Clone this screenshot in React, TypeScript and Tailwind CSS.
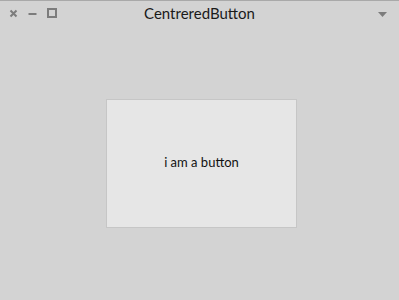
export default function App() {
  return (
    <div
      className="flex h-[300px] w-[399px] flex-col border-t border-[#a9a9a9] bg-[#d3d3d3]"
      style={{ fontFamily: 'Lato, "Noto Sans", sans-serif' }}
    >
      <header className="relative flex h-[28px] shrink-0 items-center justify-center">
        <div className="absolute left-[9px] top-[7px] flex items-center gap-[10px]">
          <svg width="9" height="9" viewBox="0 0 9 9" className="mt-[1px]">
            <path d="M1.5 1.5 L7.5 7.5 M7.5 1.5 L1.5 7.5" stroke="#7c7c7c" strokeWidth="2" />
          </svg>
          <svg width="9" height="9" viewBox="0 0 9 9">
            <path d="M0.5 5 H8.5" stroke="#7c7c7c" strokeWidth="2" />
          </svg>
          <svg width="10" height="10" viewBox="0 0 10 10">
            <rect x="1" y="1" width="8" height="8" fill="none" stroke="#7c7c7c" strokeWidth="2" />
          </svg>
        </div>
        <span className="mb-[3px] text-[15px] leading-none text-[#1a1a1a]">CentreredButton</span>
        <svg width="9" height="5" viewBox="0 0 9 5" className="absolute right-[12px] top-[11px]">
          <path d="M0 0 H9 L4.5 5 Z" fill="#7c7c7c" />
        </svg>
      </header>
      <main className="flex flex-1 items-center justify-center pb-[2px] pl-[4px]">
        <button className="flex h-[129px] w-[191px] items-center justify-center border border-[#c6c6c6] bg-[#e6e6e6] pb-[2px] text-[13px] text-[#111]">
          i am a button
        </button>
      </main>
    </div>
  );
}
